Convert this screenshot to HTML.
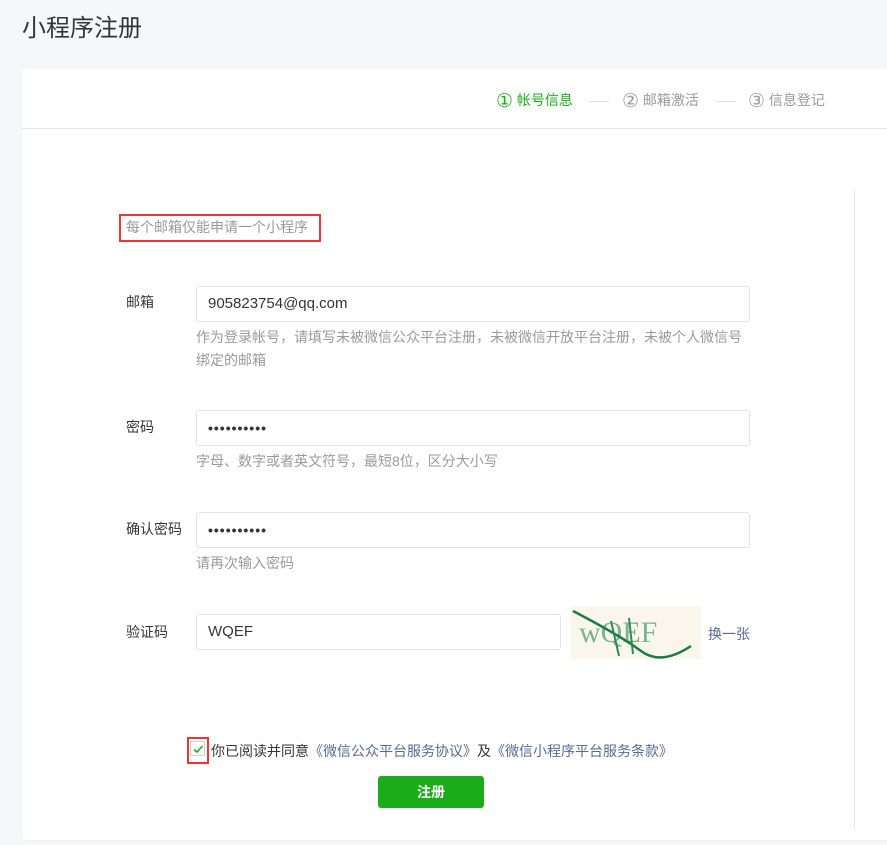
<!DOCTYPE html>
<html><head><meta charset="utf-8"><style>
*{margin:0;padding:0;box-sizing:border-box}
body{width:887px;height:845px;background:#f6f7f9;font-family:"Liberation Sans","Noto Sans CJK SC",sans-serif;position:relative;overflow:hidden;color:#353535}
.a{position:absolute;white-space:nowrap}
.card{position:absolute;left:22px;top:69px;width:880px;height:771px;background:#fff;border-radius:4px;box-shadow:0 1px 2px rgba(0,0,0,.04)}
.inp{position:absolute;left:196px;width:554px;height:36px;border:1px solid #e3e4e6;border-radius:3px;font-size:15px;padding-left:11px;line-height:34px;color:#353535}
.lbl{font-size:14px;color:#353535}
.tip{font-size:14px;color:#9a9a9a;line-height:23px}
.dots{letter-spacing:1px;font-size:14px;font-weight:bold}
.n{font-size:19px;vertical-align:-2px;font-family:"DejaVu Sans",sans-serif;font-weight:normal}
</style></head><body>
<div class="a" style="left:22px;top:8px;font-size:24px;color:#353535">小程序注册</div>
<div class="card"></div>
<div class="a" style="left:22px;top:128px;width:865px;height:1px;background:#e7e7eb"></div>
<div class="a" style="left:496px;top:90px;font-size:14px;color:#1aad19"><span class="n">①</span> 帐号信息</div>
<div class="a" style="left:589px;top:101px;width:20px;height:1px;background:#e0e0e0"></div>
<div class="a" style="left:622px;top:90px;font-size:14px;color:#9a9a9a"><span class="n">②</span> 邮箱激活</div>
<div class="a" style="left:716px;top:101px;width:20px;height:1px;background:#e0e0e0"></div>
<div class="a" style="left:748px;top:90px;font-size:14px;color:#9a9a9a"><span class="n">③</span> 信息登记</div>
<div class="a" style="left:854px;top:189px;width:1px;height:641px;background:#e4e4e4"></div>

<div class="a" style="left:119px;top:214px;width:202px;height:28px;border:2px solid #ee3535"></div>
<div class="a" style="left:126px;top:217px;font-size:14px;color:#9a9a9a">每个邮箱仅能申请一个小程序</div>

<div class="a lbl" style="left:126px;top:292px">邮箱</div>
<div class="inp" style="top:286px">905823754@qq.com</div>
<div class="a tip" style="left:196px;top:326px">作为登录帐号，请填写未被微信公众平台注册，未被微信开放平台注册，未被个人微信号<br>绑定的邮箱</div>

<div class="a lbl" style="left:126px;top:417px">密码</div>
<div class="inp dots" style="top:410px">••••••••••</div>
<div class="a tip" style="left:196px;top:450px">字母、数字或者英文符号，最短8位，区分大小写</div>

<div class="a lbl" style="left:126px;top:519px">确认密码</div>
<div class="inp dots" style="top:512px">••••••••••</div>
<div class="a tip" style="left:196px;top:552px">请再次输入密码</div>

<div class="a lbl" style="left:126px;top:622px">验证码</div>
<div class="inp" style="top:614px;width:365px">WQEF</div>
<svg class="a" style="left:571px;top:606px" width="130" height="53" viewBox="0 0 130 53">
<rect width="130" height="53" fill="#fbf6ec"/>
<text x="8" y="36" font-family="Liberation Serif" font-size="30" fill="#5aa57a" opacity=".8">wQEF</text>
<path d="M2 5 Q50 30 70 45 T120 40" stroke="#1e7a45" stroke-width="2.5" fill="none"/>
<path d="M40 15 L48 50 M58 12 L62 48" stroke="#2f8a55" stroke-width="2" fill="none"/>
</svg>
<div class="a" style="left:708px;top:624px;font-size:14px;color:#576b95">换一张</div>

<div class="a" style="left:187px;top:737px;width:22px;height:27px;border:2px solid #ee3535"></div>
<div class="a" style="left:190px;top:741px;width:15px;height:15px;border:1px solid #d0d0d0;background:#fff"></div>
<svg class="a" style="left:192px;top:743px" width="12" height="12" viewBox="0 0 12 12"><path d="M2 6.5 L5 9 L10.5 3" stroke="#1aad19" stroke-width="1.6" fill="none"/></svg>
<div class="a" style="left:211px;top:741px;font-size:14px;color:#353535">你已阅读并同意<span style="color:#576b95">《微信公众平台服务协议》</span>及<span style="color:#576b95">《微信小程序平台服务条款》</span></div>

<div class="a" style="left:378px;top:776px;width:106px;height:32px;background:#1aad19;border-radius:3px;color:#fff;font-size:14px;text-align:center;line-height:32px;font-weight:bold">注册</div>
</body></html>
